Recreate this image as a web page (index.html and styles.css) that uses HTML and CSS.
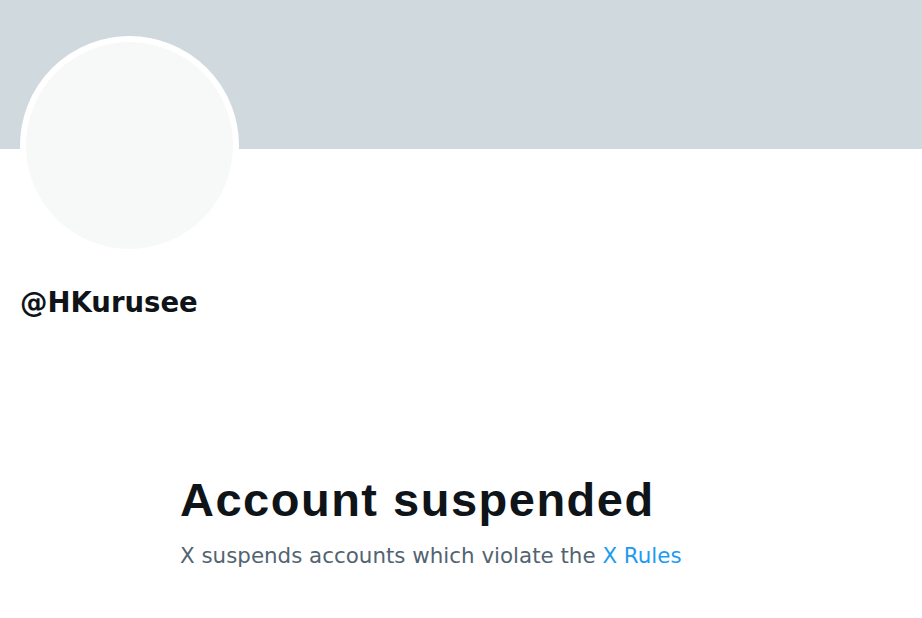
FILE: index.html
```html
<!DOCTYPE html>
<html>
<head>
<meta charset="utf-8">
<link rel="stylesheet" href="styles.css">
</head>
<body>
<div class="page">
  <div class="banner"></div>
  <div class="profile">
    <div class="avatar"><div class="avatar-inner"></div></div>
    <div class="handle">@HKurusee</div>
  </div>
  <div class="empty">
    <h1 class="title">Account suspended</h1>
    <p class="sub">X suspends accounts which violate the <a class="link" href="#">X Rules</a></p>
  </div>
</div>
</body>
</html>
```
FILE: styles.css
```css
html, body {
  margin: 0;
  padding: 0;
  background: #ffffff;
}
.page {
  width: 922px;
  height: 618px;
  overflow: hidden;
  font-family: "DejaVu Sans", sans-serif;
  color: #0f1419;
}
.banner {
  height: 149px;
  background: #cfd9de;
}
.profile {
  padding: 0 20px;
}
.avatar {
  width: 207px;
  height: 207px;
  margin-top: -113px;
  border: 6px solid #ffffff;
  border-radius: 50%;
  background: #ffffff;
  position: relative;
}
.avatar-inner {
  width: 100%;
  height: 100%;
  border-radius: 50%;
  background: #f7f9f9;
}
.handle {
  margin-top: 30px;
  font-weight: bold;
  font-size: 27.5px;
  line-height: 34px;
}
.empty {
  padding-left: 180px;
  margin-top: 153px;
}
.title {
  margin: 0;
  font-family: "Liberation Sans", sans-serif;
  font-weight: bold;
  font-size: 47px;
  line-height: 56px;
  letter-spacing: 1.5px;
}
.sub {
  margin: 14px 0 0;
  font-family: "DejaVu Sans", sans-serif;
  font-size: 21.4px;
  line-height: 28px;
  color: #536471;
}
.link {
  color: #1d9bf0;
  text-decoration: none;
}
```
